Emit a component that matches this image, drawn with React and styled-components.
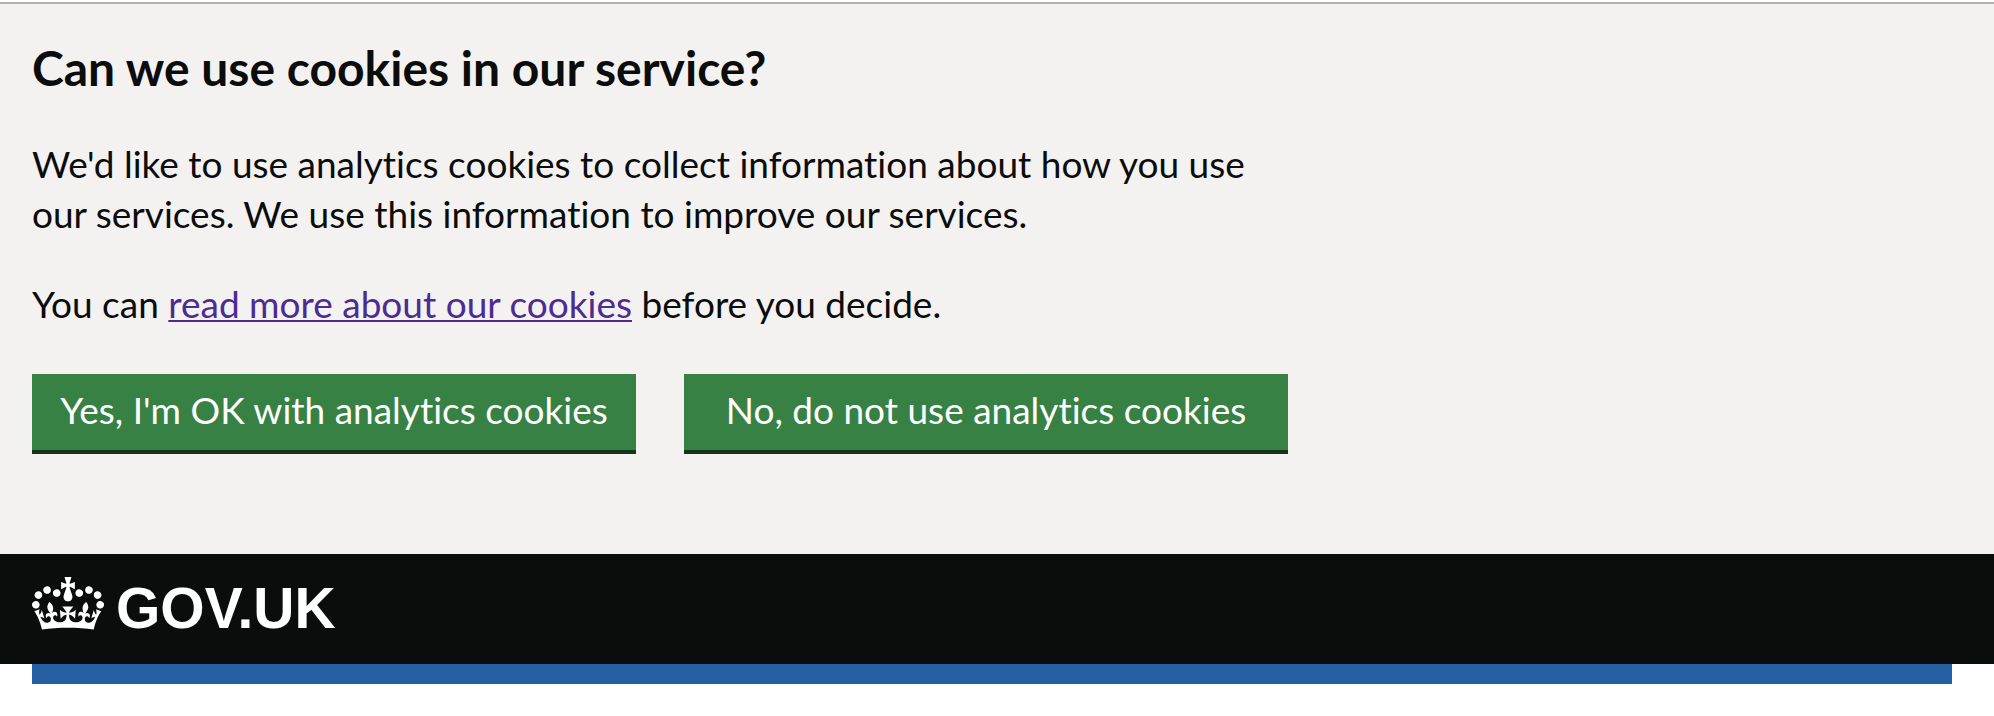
import React from "react";
import styled, { createGlobalStyle } from "styled-components";

const GlobalStyle = createGlobalStyle`
  * { box-sizing: border-box; }
  body {
    margin: 0;
    background: #ffffff;
    color: #0b0c0c;
    font-family: Lato, "Liberation Sans", Arial, sans-serif;
    font-variant-ligatures: no-common-ligatures;
  }
`;

const CookieBanner = styled.section`
  margin-top: 2px;
  padding: 38px 32px 100px;
  border-top: 2px solid #b3b1b2;
  background: #f3f2f1;
`;

const BannerContent = styled.div`
  max-width: 1256px;
`;

const Heading = styled.h2`
  margin: 0 0 45px;
  font-size: 48px;
  font-weight: 700;
  line-height: 52px;
`;

const Paragraph = styled.p`
  margin: 0 0 40px;
  font-size: 37px;
  line-height: 50px;
`;

const Link = styled.a`
  color: #4c2c92;
  text-decoration: underline;
  text-decoration-thickness: 2px;
  text-underline-offset: 2px;
`;

const ButtonGroup = styled.div`
  display: grid;
  grid-template-columns: repeat(2, 1fr);
  gap: 48px;
  padding-top: 5px;
`;

const Button = styled.button`
  margin: 0;
  padding: 11px 16px 15px;
  border: 0;
  border-bottom: 4px solid #14351c;
  border-radius: 0;
  background: #388144;
  color: #ffffff;
  font: inherit;
  font-size: 37px;
  line-height: 50px;
  cursor: pointer;
`;

const Header = styled.header`
  padding: 23px 32px 25px;
  background: #0b0c0c;
`;

const LogoLink = styled.a`
  display: inline-flex;
  align-items: flex-start;
  gap: 12px;
  color: #ffffff;
  text-decoration: none;
  vertical-align: top;
`;

const LogoText = styled.span`
  font-family: "Liberation Sans", Arial, sans-serif;
  font-size: 57px;
  font-weight: 700;
  line-height: 62px;
`;

const HeaderBar = styled.div`
  height: 20px;
  margin: 0 42px 0 32px;
  background: #245fa1;
`;

const Crown = () => (
  <svg width="72" height="53" viewBox="0 0 132 97" fill="currentColor" aria-hidden="true">
    <path
      fillRule="evenodd"
      d="M25 30.2c3.5 1.5 7.7-.2 9.1-3.7 1.5-3.6-.2-7.8-3.9-9.2-3.6-1.4-7.6.3-9.1 3.9-1.4 3.5.3 7.5 3.9 9zM9 39.5c3.6 1.5 7.8-.2 9.2-3.7 1.5-3.6-.2-7.8-3.9-9.1-3.6-1.5-7.6.2-9.1 3.8-1.4 3.5.3 7.5 3.8 9zM4.4 57.2c3.5 1.5 7.7-.2 9.1-3.8 1.5-3.6-.2-7.7-3.9-9.1-3.5-1.5-7.6.3-9.1 3.8-1.4 3.5.3 7.6 3.9 9.1zm38.3-21.4c3.5 1.5 7.7-.2 9.1-3.8 1.5-3.6-.2-7.7-3.9-9.1-3.6-1.5-7.6.3-9.1 3.8-1.3 3.6.4 7.7 3.9 9.1zm64.4-5.6c-3.6 1.5-7.8-.2-9.1-3.7-1.5-3.6.2-7.8 3.8-9.2 3.6-1.4 7.7.3 9.2 3.9 1.3 3.5-.4 7.5-3.9 9zm15.9 9.3c-3.6 1.5-7.7-.2-9.1-3.7-1.5-3.6.2-7.8 3.7-9.1 3.6-1.5 7.7.2 9.2 3.8 1.5 3.5-.3 7.5-3.8 9zm4.7 17.7c-3.6 1.5-7.8-.2-9.2-3.8-1.5-3.6.2-7.7 3.9-9.1 3.6-1.5 7.7.3 9.2 3.8 1.3 3.5-.4 7.6-3.9 9.1zM89.3 35.8c-3.6 1.5-7.8-.2-9.2-3.8-1.4-3.6.2-7.7 3.9-9.1 3.6-1.5 7.7.3 9.2 3.8 1.4 3.6-.3 7.7-3.9 9.1zM69.7 17.7l8.9 4.7V9.3l-8.9 2.8c-.2-.3-.5-.6-.9-.9L72.4 0H59.6l3.5 11.2c-.3.3-.6.5-.9.9l-8.8-2.8v13.1l8.8-4.7c.3.3.6.7.9.9l-5 15.4v.1c-.2.8-.4 1.6-.4 2.4 0 4.1 3.1 7.5 7 8.1h.2c.3 0 .7.1 1 .1.4 0 .7 0 1-.1h.2c4-.6 7.1-4.1 7.1-8.1 0-.8-.1-1.7-.4-2.4V34l-5.1-15.4c.4-.2.7-.6 1-.9zM66 92.8c16.9 0 32.8 1.1 47.1 3.2 4-16.9 8.9-26.7 14-33.5l-9.6-3.4c1 4.9 1.1 7.2 0 10.2-1.5-1.4-3-4.3-4.2-8.7L108.6 76c2.8-2 5-3.2 7.5-3.3-4.4 9.4-10 11.9-13.6 11.2-4.3-.8-6.3-4.6-5.6-7.9 1-4.7 5.7-5.9 8-.5 4.3-8.7-3-11.4-7.6-8.8 7.1-7.2 7.9-13.5 2.1-21.1-8 6.1-8.1 12.3-4.5 20.8-4.7-5.4-12.1-2.5-9.5 6.2 3.4-5.2 7.9-2 7.2 3.1-.6 4.3-6.4 7.8-13.5 7.2-10.3-.9-10.9-8-11.2-13.8 2.5-.5 7.1 1.8 11 7.3L80.2 60c-4.1 4.4-8 5.3-12.3 5.4 1.4-4.4 8-11.6 8-11.6H55.5s6.4 7.2 7.9 11.6c-4.2-.1-8-1-12.3-5.4l1.4 16.4c3.9-5.5 8.5-7.7 10.9-7.3-.3 5.8-.9 12.8-11.1 13.8-7.2.6-12.9-2.9-13.5-7.2-.7-5 3.8-8.3 7.1-3.1 2.7-8.7-4.6-11.6-9.4-6.2 3.7-8.5 3.6-14.7-4.6-20.8-5.8 7.6-5 13.9 2.2 21.1-4.7-2.6-11.9.1-7.7 8.8 2.3-5.5 7.1-4.2 8.1.5.7 3.3-1.3 7.1-5.7 7.9-3.5.7-9-1.8-13.5-11.2 2.5.1 4.7 1.3 7.5 3.3l-4.7-15.4c-1.2 4.4-2.7 7.2-4.3 8.7-1.1-3-.9-5.3 0-10.2l-9.5 3.4c5 6.9 9.9 16.7 14 33.5 14.8-2.1 30.8-3.2 47.7-3.2z"
    />
  </svg>
);

export default function App() {
  return (
    <>
      <GlobalStyle />
      <CookieBanner aria-labelledby="cookie-heading">
        <BannerContent>
          <Heading id="cookie-heading">Can we use cookies in our service?</Heading>
          <Paragraph>
            We'd like to use analytics cookies to collect information about how you use our
            services. We use this information to improve our services.
          </Paragraph>
          <Paragraph>
            You can <Link href="#cookies">read more about our cookies</Link> before you decide.
          </Paragraph>
          <ButtonGroup>
            <Button type="button">Yes, I'm OK with analytics cookies</Button>
            <Button type="button">No, do not use analytics cookies</Button>
          </ButtonGroup>
        </BannerContent>
      </CookieBanner>
      <Header>
        <LogoLink href="#home">
          <Crown />
          <LogoText>GOV.UK</LogoText>
        </LogoLink>
      </Header>
      <HeaderBar />
    </>
  );
}
